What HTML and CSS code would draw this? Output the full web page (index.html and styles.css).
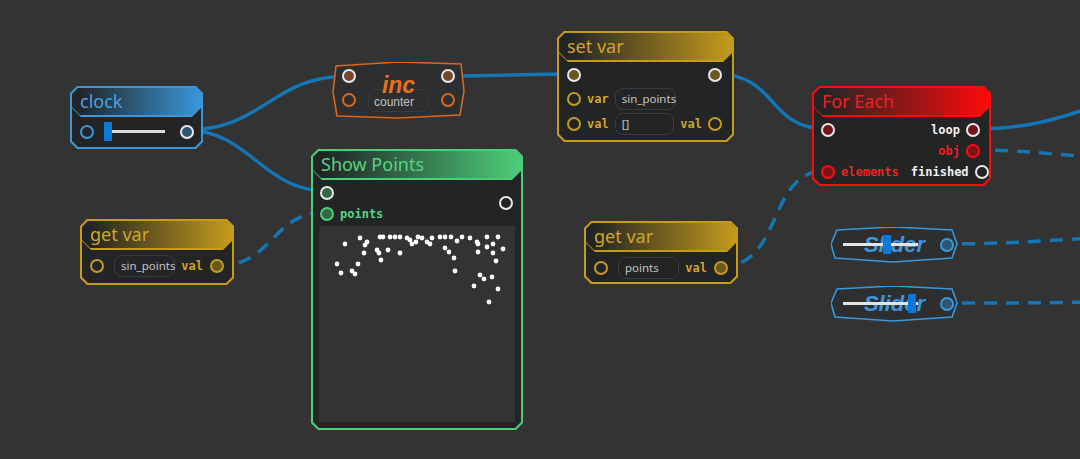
FILE: index.html
```html
<!DOCTYPE html>
<html lang="en">
<head>
    <meta charset="UTF-8">
    <title>Node editor</title>
    <link rel="stylesheet" href="styles.css">
</head>
<body>
    <div class="canvas">
        <svg class="wires" width="1080" height="459" viewBox="0 0 1080 459">
            <path d="M185 130 C 265 130, 270 76, 349 76"/>
            <path d="M185 130 C 250 130, 262 191, 327 191"/>
            <path d="M448 76 C 510 76, 515 74, 575 74"/>
            <path d="M715 74 C 780 74, 765 129, 828 129"/>
            <path d="M973 129 C 1025 129, 1055 120, 1095 106"/>
            <path class="dash" d="M973 150 C 1020 150, 1050 154, 1095 157"/>
            <path class="dash" d="M217 266 C 275 266, 270 212, 327 212"/>
            <path class="dash" d="M720 267 C 785 267, 765 170, 828 170"/>
            <path class="dash" d="M940 244 C 1000 244, 1040 241, 1095 238"/>
            <path class="dash" d="M940 303 C 1000 303, 1040 303, 1095 302"/>
        </svg>

        <!-- clock -->
        <div class="node blue n-clock">
            <div class="node-in">
                <div class="head"><div class="head-fill">clock</div></div>
                <div class="body">
                    <div class="row">
                        <span class="port"></span>
                        <div class="mini-slider"><span class="thumb"></span><span class="track"></span></div>
                        <span class="spacer"></span>
                        <span class="port exec"></span>
                    </div>
                </div>
            </div>
        </div>

        <!-- inc -->
        <div class="shape orange n-inc">
            <svg class="outline" width="134" height="57" viewBox="0 0 134 57">
                <polygon points="4,4 66,0 129,2 132,29 128,53 66,56 5,54 1,30"/>
            </svg>
            <div class="inc-body">
                <div class="port-col"><span class="port exec"></span><span class="port"></span></div>
                <div class="inc-mid">
                    <span class="inc-title">inc</span>
                    <span class="field inc-field">counter</span>
                </div>
                <div class="port-col"><span class="port exec"></span><span class="port"></span></div>
            </div>
        </div>

        <!-- set var -->
        <div class="node gold n-setvar">
            <div class="node-in">
                <div class="head"><div class="head-fill">set var</div></div>
                <div class="body">
                    <div class="row r-exec">
                        <span class="port exec"></span>
                        <span class="spacer"></span>
                        <span class="port exec"></span>
                    </div>
                    <div class="row r-field">
                        <span class="port"></span>
                        <span class="lbl">var</span>
                        <span class="field">sin_points</span>
                    </div>
                    <div class="row r-field">
                        <span class="port"></span>
                        <span class="lbl">val</span>
                        <span class="field">[]</span>
                        <span class="spacer"></span>
                        <span class="lbl">val</span>
                        <span class="port"></span>
                    </div>
                </div>
            </div>
        </div>

        <!-- for each -->
        <div class="node red n-foreach">
            <div class="node-in">
                <div class="head"><div class="head-fill">For Each</div></div>
                <div class="body">
                    <div class="row">
                        <span class="port exec"></span>
                        <span class="spacer"></span>
                        <span class="lbl white">loop</span>
                        <span class="port exec"></span>
                    </div>
                    <div class="row">
                        <span class="spacer"></span>
                        <span class="lbl">obj</span>
                        <span class="port fill"></span>
                    </div>
                    <div class="row">
                        <span class="port fill"></span>
                        <span class="lbl">elements</span>
                        <span class="spacer"></span>
                        <span class="lbl white">finished</span>
                        <span class="port out"></span>
                    </div>
                </div>
            </div>
        </div>

        <!-- show points -->
        <div class="node green n-show">
            <div class="node-in">
                <div class="head"><div class="head-fill">Show Points</div></div>
                <div class="body">
                    <div class="show-ports">
                        <div class="show-left">
                            <div class="row"><span class="port exec"></span></div>
                            <div class="row"><span class="port fill"></span><span class="lbl">points</span></div>
                        </div>
                        <span class="port out"></span>
                    </div>
                    <div class="plot">
                        <svg width="196" height="196" viewBox="0 0 196 196" id="plot"></svg>
                    </div>
                </div>
            </div>
        </div>

        <!-- get var (left) -->
        <div class="node gold n-getvar1">
            <div class="node-in">
                <div class="head"><div class="head-fill">get var</div></div>
                <div class="body">
                    <div class="row r-field">
                        <span class="port"></span>
                        <span class="field wide">sin_points</span>
                        <span class="spacer"></span>
                        <span class="lbl">val</span>
                        <span class="port fill"></span>
                    </div>
                </div>
            </div>
        </div>

        <!-- get var (right) -->
        <div class="node gold n-getvar2">
            <div class="node-in">
                <div class="head"><div class="head-fill">get var</div></div>
                <div class="body">
                    <div class="row r-field">
                        <span class="port"></span>
                        <span class="field wide">points</span>
                        <span class="spacer"></span>
                        <span class="lbl">val</span>
                        <span class="port fill"></span>
                    </div>
                </div>
            </div>
        </div>

        <!-- sliders -->
        <div class="shape blue n-slider1">
            <svg class="outline" width="127" height="36" viewBox="0 0 127 36">
                <polygon points="6,3 62,0 121,3 126,17 121,31 62,35 4,31 0,17"/>
            </svg>
            <div class="slider-body">
                <div class="slider-area">
                    <span class="slider-title">Slider</span>
                    <span class="slider-track"></span>
                    <span class="slider-thumb t1"></span>
                </div>
                <span class="port fill"></span>
            </div>
        </div>
        <div class="shape blue n-slider2">
            <svg class="outline" width="127" height="36" viewBox="0 0 127 36">
                <polygon points="6,3 62,0 121,3 126,17 121,31 62,35 4,31 0,17"/>
            </svg>
            <div class="slider-body">
                <div class="slider-area">
                    <span class="slider-title">Slider</span>
                    <span class="slider-track"></span>
                    <span class="slider-thumb t2"></span>
                </div>
                <span class="port fill"></span>
            </div>
        </div>
    </div>

    <script>
        // puntos de la grafica (x, y dentro del area)
        const points = [
            [41,12],[26,18],[18,38],[22,47],[39,38],[33,45],[36,48],[46,19],[48,16],[45,27],
            [61,11],[64,11],[71,11],[76,11],[81,11],[88,12],[91,14],[93,18],[97,16],[99,11],
            [103,12],[108,16],[111,18],[113,12],[58,24],[60,27],[62,34],[69,24],[81,27],
            [121,11],[126,11],[132,11],[138,15],[143,11],[151,12],[126,22],[130,26],[135,32],
            [136,45],[158,16],[159,18],[159,26],[168,11],[168,21],[174,18],[179,11],[184,23],
            [174,27],[177,35],[161,49],[165,53],[173,51],[155,60],[179,63],[170,76]
        ];
        const plot = document.getElementById('plot');
        points.forEach(([x, y]) => {
            const c = document.createElementNS('http://www.w3.org/2000/svg', 'circle');
            c.setAttribute('cx', x);
            c.setAttribute('cy', y);
            c.setAttribute('r', 2.4);
            plot.appendChild(c);
        });
    </script>
</body>
</html>
```

FILE: styles.css
```css
body {
    margin: 0;
    background: #333333;
    font-family: "Noto Sans", "Open Sans", sans-serif;
}
.canvas {
    position: relative;
    width: 1080px;
    height: 459px;
    overflow: hidden;
    background: #333333;
}
.wires {
    position: absolute;
    left: 0;
    top: 0;
}
.wires path {
    fill: none;
    stroke: #1476b4;
    stroke-width: 3.5;
}
.wires path.dash {
    stroke-dasharray: 13 9;
}

/* colours */
.blue { --c: #3a97da; --t: #4aa4e2; --p: #2c5676; }
.gold { --c: #c49b1b; --t: #d1a526; --p: #6a5720; }
.red { --c: #ff0a0a; --t: #f02020; --p: #751519; }
.green { --c: #4cce78; --t: #55d482; --p: #2f6a47; }
.orange { --c: #d8661b; --t: #e8701c; --p: #7a472a; }

/* nodes */
.node {
    position: absolute;
    box-sizing: border-box;
    padding: 2px;
    background: var(--c);
    clip-path: polygon(7px 0, calc(100% - 7px) 0, 100% 7px, 100% calc(100% - 7px), calc(100% - 7px) 100%, 7px 100%, 0 calc(100% - 7px), 0 7px);
}
.node-in {
    height: 100%;
    background: #222426;
    clip-path: polygon(6px 0, calc(100% - 6px) 0, 100% 6px, 100% calc(100% - 6px), calc(100% - 6px) 100%, 6px 100%, 0 calc(100% - 6px), 0 6px);
}
.head {
    background: var(--c);
    padding-bottom: 2px;
    clip-path: polygon(0 0, 100% 0, 100% calc(100% - 9px), calc(100% - 9px) 100%, 9px 100%, 0 calc(100% - 9px));
}
.head-fill {
    height: 27px;
    line-height: 27px;
    padding-left: 8px;
    font-size: 18px;
    color: var(--t);
    background: linear-gradient(90deg, #222426 5%, var(--c) 100%);
    clip-path: polygon(0 0, 100% 0, 100% calc(100% - 8px), calc(100% - 8px) 100%, 8px 100%, 0 calc(100% - 8px));
}
.row {
    display: flex;
    align-items: center;
    height: 21px;
    padding: 0 8px 0 7px;
}
.spacer {
    flex: 1;
}
.port {
    box-sizing: border-box;
    flex: none;
    width: 14px;
    height: 14px;
    border-radius: 50%;
    border: 2px solid var(--c);
}
.port.exec {
    border-color: #e8e8e8;
    background: var(--p);
}
.port.fill {
    background: var(--p);
}
.port.out {
    border-color: #e8e8e8;
}
.lbl {
    font-family: "DejaVu Sans Mono", monospace;
    font-weight: bold;
    font-size: 12px;
    color: var(--t);
    margin: 0 6px;
}
.lbl.white {
    color: #f0f0f0;
}
.field {
    box-sizing: border-box;
    width: 61px;
    height: 22px;
    line-height: 20px;
    padding: 0 6px;
    border: 1px solid #3a3c3f;
    border-radius: 8px;
    font-size: 11.5px;
    color: #c4c4c4;
    white-space: nowrap;
}

/* clock */
.n-clock { left: 70px; top: 86px; width: 133px; height: 63px; }
.n-clock .body { padding-top: 4px; }
.n-clock .row { padding: 0 7px 0 8px; }
.mini-slider {
    display: flex;
    align-items: center;
    margin-left: 10px;
}
.mini-slider .thumb {
    width: 8px;
    height: 19px;
    background: #0c78d8;
}
.mini-slider .track {
    width: 53px;
    height: 3px;
    background: #dcdcdc;
}

/* set var */
.n-setvar { left: 557px; top: 31px; width: 177px; height: 111px; }
.n-setvar .body { padding-top: 2px; }
.n-setvar .row { padding: 0 10px 0 8px; }
.n-setvar .r-exec { height: 22px; }
.r-field { height: 25px; }
.n-setvar .lbl:first-of-type { margin-right: 9px; }

/* for each */
.n-foreach { left: 812px; top: 86px; width: 179px; height: 100px; }
.n-foreach .body { padding-top: 2px; }
.n-foreach .row { padding: 0 9px 0 7px; }

/* show points */
.n-show { left: 311px; top: 149px; width: 212px; height: 281px; }
.show-ports {
    display: flex;
    align-items: center;
    padding: 2px 8px 0 0;
}
.show-left {
    flex: 1;
}
.plot {
    margin: 2px 6px 0;
    width: 196px;
    height: 196px;
    background: #333333;
}
.plot svg {
    display: block;
}
.plot circle {
    fill: #ffffff;
}

/* get var */
.n-getvar1 { left: 80px; top: 219px; width: 154px; height: 66px; }
.n-getvar2 { left: 584px; top: 221px; width: 154px; height: 63px; }
.n-getvar1 .body, .n-getvar2 .body { padding-top: 3px; }
.n-getvar1 .row, .n-getvar2 .row { padding: 0 8px; }
.field.wide { margin-left: 10px; }
.n-getvar1 .lbl, .n-getvar2 .lbl { margin: 0 7px 0 0; }

/* hexagon shaped nodes */
.shape {
    position: absolute;
}
.shape .outline {
    position: absolute;
    left: 0;
    top: 0;
}
.shape .outline polygon {
    fill: #2d2e30;
    stroke: var(--c);
    stroke-width: 1.6;
}
.n-inc { left: 332px; top: 62px; width: 134px; height: 57px; }
.inc-body {
    position: relative;
    display: flex;
    justify-content: space-between;
    height: 100%;
    padding: 7px 11px 0 10px;
    box-sizing: border-box;
}
.port-col {
    display: flex;
    flex-direction: column;
    gap: 10px;
}
.inc-mid {
    position: relative;
    display: flex;
    flex-direction: column;
    align-items: center;
    padding-top: 8px;
}
.inc-title {
    font-family: "Liberation Sans", Arial, sans-serif;
    font-weight: bold;
    font-style: italic;
    font-size: 23px;
    line-height: 17px;
    height: 17px;
    color: var(--t);
    position: relative;
    z-index: 2;
}
.inc-field {
    margin-top: 0;
    font-family: "Liberation Sans", Arial, sans-serif;
    font-size: 12px;
    line-height: 18px;
    height: 23px;
    margin-top: -5px;
    padding: 3px 5px 0;
    border-color: #3a3a3a;
    background: transparent;
    color: #c0c0c0;
    position: relative;
    z-index: 1;
}

.n-slider1 { left: 831px; top: 227px; width: 127px; height: 36px; }
.n-slider2 { left: 831px; top: 286px; width: 127px; height: 36px; }
.slider-body {
    position: relative;
    display: flex;
    align-items: center;
    height: 100%;
    padding: 0 11px 0 12px;
}
.slider-area {
    position: relative;
    width: 75px;
    height: 100%;
    display: flex;
    align-items: center;
    justify-content: center;
    margin-right: 22px;
}
.slider-title {
    font-family: "Liberation Sans", Arial, sans-serif;
    font-weight: bold;
    font-style: italic;
    font-size: 22px;
    color: #3f94da;
    margin-left: 28px;
}
.slider-track {
    position: absolute;
    left: 0;
    top: 16px;
    width: 75px;
    height: 3px;
    background: #e4e4e4;
}
.slider-thumb {
    position: absolute;
    top: 8px;
    width: 8px;
    height: 19px;
    background: #0a78d8;
}
.slider-thumb.t1 { left: 40px; }
.slider-thumb.t2 { left: 65px; }
```
